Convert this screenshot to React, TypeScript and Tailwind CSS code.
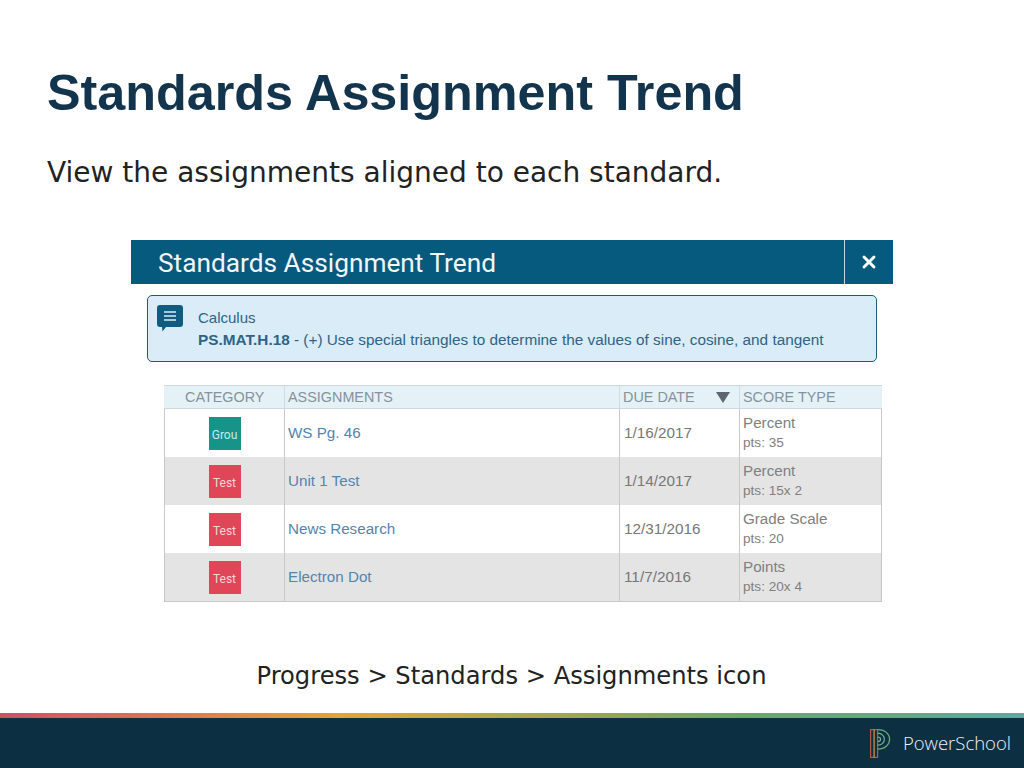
import { X } from 'lucide-react';

const rows = [
  { cat: 'Grou', color: 'bg-[#17938a]', textColor: 'text-[#c8ece8]', name: 'WS Pg. 46', date: '1/16/2017', type: 'Percent', pts: 'pts: 35', shaded: false },
  { cat: 'Test', color: 'bg-[#e04558]', textColor: 'text-[#f6d5d9]', name: 'Unit 1 Test', date: '1/14/2017', type: 'Percent', pts: 'pts: 15x 2', shaded: true },
  { cat: 'Test', color: 'bg-[#e04558]', textColor: 'text-[#f6d5d9]', name: 'News Research', date: '12/31/2016', type: 'Grade Scale', pts: 'pts: 20', shaded: false },
  { cat: 'Test', color: 'bg-[#e04558]', textColor: 'text-[#f6d5d9]', name: 'Electron Dot', date: '11/7/2016', type: 'Points', pts: 'pts: 20x 4', shaded: true },
];

function Logo() {
  return (
    <svg width="21" height="29" viewBox="0 0 21 29" fill="none">
      <path d="M.6.6h7v27.800h-7z" stroke="#b9564a" strokeWidth="1.2" />
      <path d="M4.100.6v27.800" stroke="#d9a03c" strokeWidth="1.2" />
      <path d="M7.600.6c16 0 16 19.500 0 19.500" stroke="#6fae6b" strokeWidth="1.2" />
      <path d="M7.600 4.200c9 0 9 12 0 12" stroke="#6fb0a0" strokeWidth="1.2" />
      <path d="M7.600 8c4 0 4 4.500 0 4.500" stroke="#6fb0a0" strokeWidth="1.2" />
    </svg>
  );
}

export default function App() {
  return (
    <div className="w-[1024px] h-[768px] bg-white flex flex-col overflow-hidden font-['Liberation_Sans',sans-serif]">
      <h1 className="ml-[47px] mt-[64px] text-[50.3px] leading-[58px] font-bold text-[#12344d] whitespace-nowrap">Standards Assignment Trend</h1>
      <p className="ml-[47px] mt-[34px] text-[28px] leading-[34px] text-[#222222] font-['DejaVu_Sans',sans-serif] whitespace-nowrap">View the assignments aligned to each standard.</p>

      <div className="ml-[131px] mt-[50px] w-[762px]">
        <div className="h-[44px] bg-[#055a7e] flex items-center text-white">
          <div className="flex-1 pl-[27px] pt-[3px] text-[26.25px] font-['Roboto',sans-serif] text-[#f2f6f8]">Standards Assignment Trend</div>
          <div className="w-[49px] h-full border-l border-[#c5d8e2] flex items-center justify-center">
            <X size={20} strokeWidth={3.5} />
          </div>
        </div>

        <div className="mt-[11px] ml-[16px] w-[730px] h-[67px] bg-[#d9ecf8] border border-[#1c5c78] rounded-[5px] flex">
          <svg className="ml-[9px] mt-[9px]" width="26" height="27" viewBox="0 0 26 27">
            <path d="M3 0h20a3 3 0 0 1 3 3v16a3 3 0 0 1-3 3H9l-3.500 4.500-.5-4.500H3a3 3 0 0 1-3-3V3a3 3 0 0 1 3-3z" fill="#0f5c80" />
            <path d="M7 7h12M7 11h12M7 15h12" stroke="#d9ecf8" strokeWidth="1.500" />
          </svg>
          <div className="ml-[15px] pt-[13px] text-[#2d6485]">
            <div className="text-[15px] leading-[18px]">Calculus</div>
            <div className="text-[15.33px] leading-[18px] mt-[4px] whitespace-nowrap">
              <span className="font-bold">PS.MAT.H.18</span> - (+) Use special triangles to determine the values of sine, cosine, and tangent
            </div>
          </div>
        </div>

        <div className="mt-[23px] ml-[33px] w-[718px] border-b border-l border-r border-[#c8c8c8]">
          <div className="h-[24px] bg-[#e4f1f7] border-t border-b border-[#cfd8dc] flex text-[14.4px] leading-[22px] text-[#87929a] -mx-px">
            <div className="w-[121px] pl-[21px] border-r border-[#d2dadd]">CATEGORY</div>
            <div className="w-[335px] pl-[3px] border-r border-[#d2dadd]">ASSIGNMENTS</div>
            <div className="w-[120px] pl-[3px] pr-[9px] border-r border-[#d2dadd] flex items-center justify-between">
              <span>DUE DATE</span>
              <span className="w-0 h-0 border-l-[7px] border-r-[7px] border-t-[11px] border-l-transparent border-r-transparent border-t-[#5d6670]" />
            </div>
            <div className="flex-1 pl-[3px]">SCORE TYPE</div>
          </div>
          {rows.map((r) => (
            <div key={r.name} className={`h-[48px] flex ${r.shaded ? 'bg-[#e4e4e4]' : 'bg-white'}`}>
              <div className="w-[120px] border-r border-[#c8c8c8] flex items-center justify-center">
                <div className={`w-[32px] h-[33px] pt-[3px] ${r.color} ${r.textColor} text-[12px] flex items-center justify-center font-['Roboto',sans-serif]`}>{r.cat}</div>
              </div>
              <div className="w-[335px] border-r border-[#c8c8c8] pl-[3px] flex items-center text-[15.2px] text-[#5385ad]">{r.name}</div>
              <div className="w-[120px] border-r border-[#c8c8c8] pl-[4px] flex items-center text-[15.3px] text-[#777777]">{r.date}</div>
              <div className="flex-1 pl-[3px] pt-[3px] text-[#808080]">
                <div className="text-[15.2px] leading-[21px]">{r.type}</div>
                <div className="text-[13.6px] leading-[19px]">{r.pts}</div>
              </div>
            </div>
          ))}
        </div>
      </div>

      <p className="mt-[59px] ml-[-1px] text-center text-[24.2px] leading-[30px] text-[#222222] font-['DejaVu_Sans',sans-serif]">Progress &gt; Standards &gt; Assignments icon</p>

      <div className="mt-auto h-[5px] bg-[linear-gradient(to_right,#cf5160_0%,#e3a33c_33%,#6da860_72%,#5fa8a2_100%)]" />
      <div className="h-[50px] bg-[#0d2f42] flex items-center justify-end pr-[13px]">
        <Logo />
        <span className="ml-[12px] text-[18.5px] font-light text-[#eef3f5] font-['Open_Sans',sans-serif]">PowerSchool</span>
      </div>
    </div>
  );
}
